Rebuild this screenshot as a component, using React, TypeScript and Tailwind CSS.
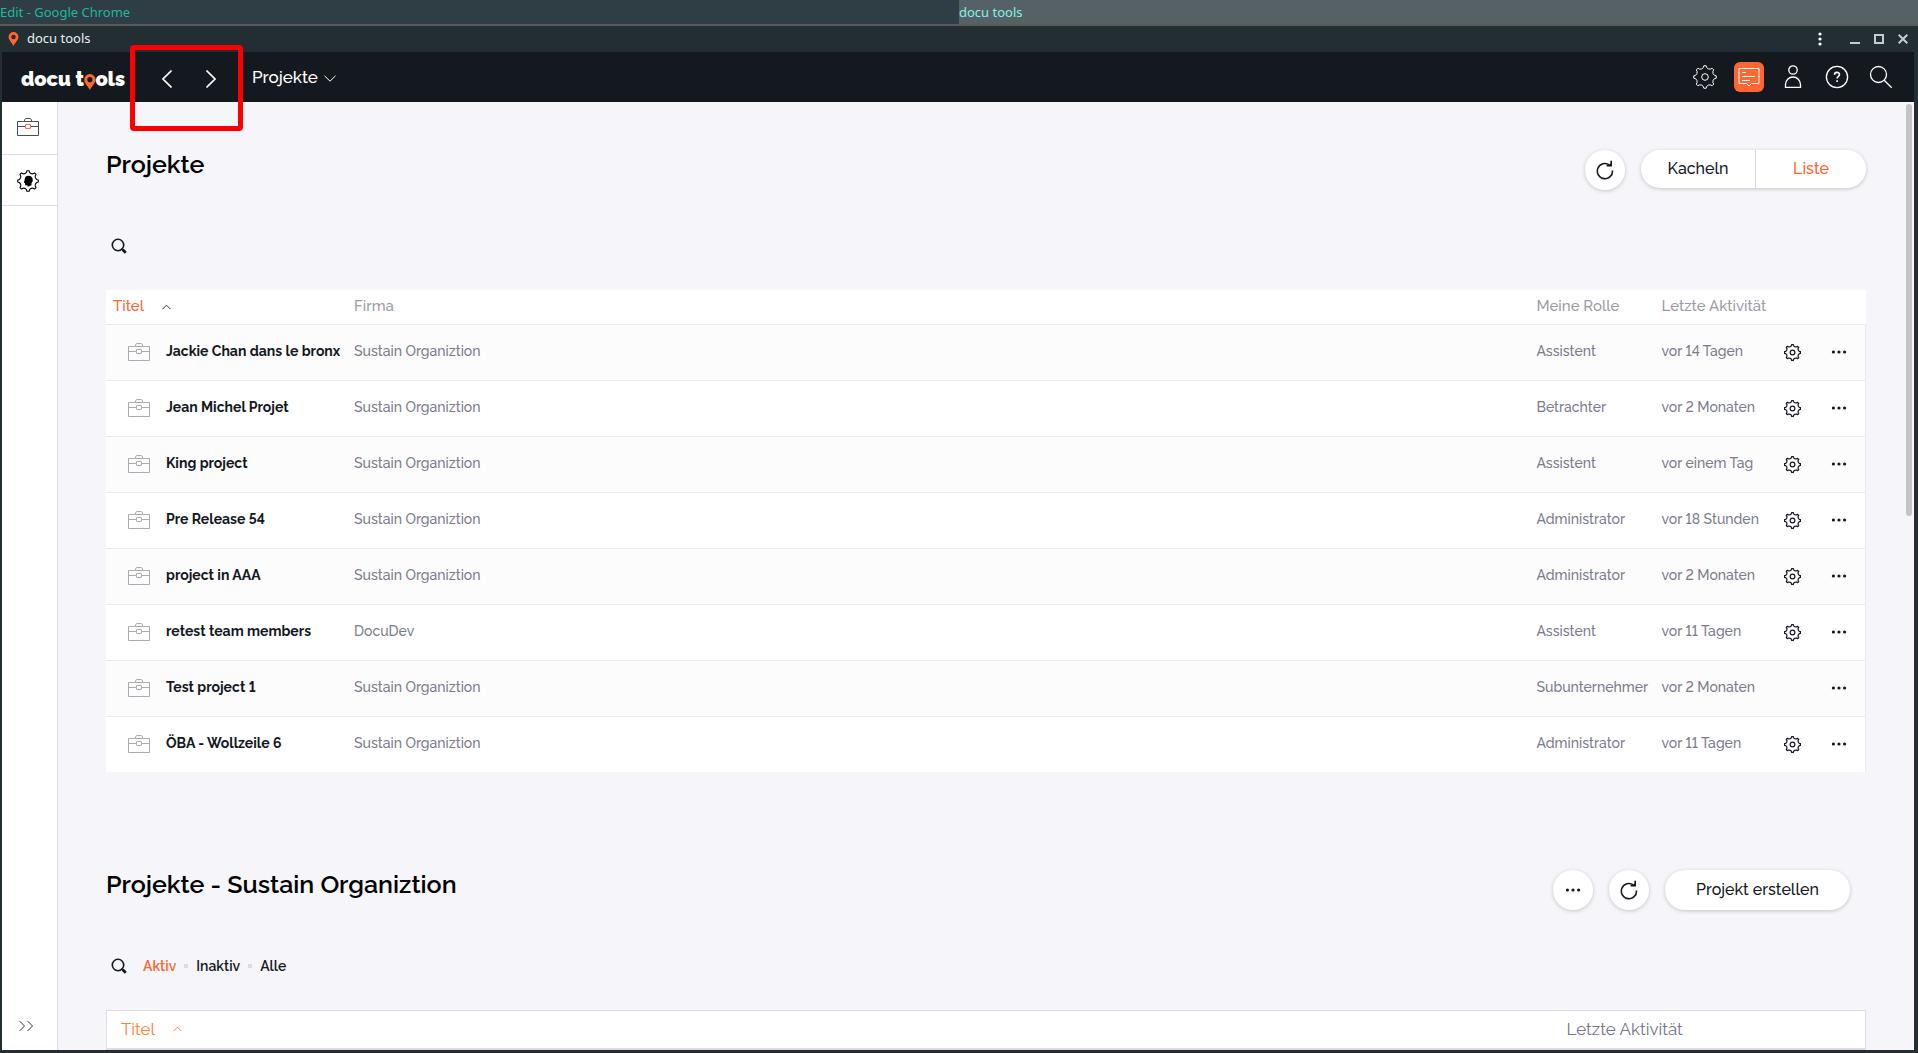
import type { ReactNode } from "react";

const projects = [
    { title: "Jackie Chan dans le bronx", company: "Sustain Organiztion", role: "Assistent", activity: "vor 14 Tagen", settings: true },
    { title: "Jean Michel Projet", company: "Sustain Organiztion", role: "Betrachter", activity: "vor 2 Monaten", settings: true },
    { title: "King project", company: "Sustain Organiztion", role: "Assistent", activity: "vor einem Tag", settings: true },
    { title: "Pre Release 54", company: "Sustain Organiztion", role: "Administrator", activity: "vor 18 Stunden", settings: true },
    { title: "project in AAA", company: "Sustain Organiztion", role: "Administrator", activity: "vor 2 Monaten", settings: true },
    { title: "retest team members", company: "DocuDev", role: "Assistent", activity: "vor 11 Tagen", settings: true },
    { title: "Test project 1", company: "Sustain Organiztion", role: "Subunternehmer", activity: "vor 2 Monaten", settings: false },
    { title: "ÖBA - Wollzeile 6", company: "Sustain Organiztion", role: "Administrator", activity: "vor 11 Tagen", settings: true },
];

// Outline of an eight tooth gear, centered in a 24x24 box
function gearOutline() {
    const point = (deg: number, r: number) => {
        const a = (deg * Math.PI) / 180;
        return `${(12 + r * Math.sin(a)).toFixed(2)} ${(12 - r * Math.cos(a)).toFixed(2)}`;
    };
    let d = `M${point(-6, 11.3)}`;
    for (let i = 0; i < 8; i++) {
        const a = i * 45;
        d += `L${point(a + 6, 11.3)}L${point(a + 10, 9.6)}A4.2 4.2 0 0 0 ${point(a + 35, 9.6)}L${point(a + 39, 11.3)}`;
    }
    return d + "Z";
}

const GEAR = gearOutline();

function Gear({ className, stroke, children }: { className: string; stroke: number; children?: ReactNode }) {
    return (
        <svg viewBox="0 0 24 24" className={className} fill="none" stroke="currentColor" strokeWidth={stroke} strokeLinejoin="round">
            <path d={GEAR} />
            {children ?? <circle cx="12" cy="12" r="3.3" />}
        </svg>
    );
}

function Briefcase({ accent }: { accent: string }) {
    return (
        <svg viewBox="0 0 22 18" className="h-[18px] w-[22px]" fill="none" stroke="currentColor">
            <path d="M.5 3.500h21v14H.5zM1 8.500h7.500M13.500 8.500H21M7.500 3.500v-1.500l1-1.500h5l1 1.500v1.500" />
            <rect x="8.500" y="6.500" width="5" height="4" rx=".5" stroke={accent} />
        </svg>
    );
}

function SearchSmall() {
    return (
        <svg viewBox="0 0 16 16" className="size-4" fill="none" stroke="currentColor">
            <circle cx="7" cy="7" r="5.700" strokeWidth="1.600" />
            <path d="M10.500 10.500l1 1" strokeWidth="1.600" />
            <path d="M11.500 11.500l3.300 3.300" strokeWidth="2.800" />
        </svg>
    );
}

function Refresh() {
    return (
        <svg viewBox="0 0 18 20" className="h-5 w-[18px]" fill="none" stroke="currentColor" strokeWidth="1.600">
            <path d="M16.500 10.500A7.600 7.600 0 1 1 13.400 5" />
            <path d="M15.200.8v4.800h-4.600" />
            <path d="M12.500 5.600l2.700-2v2z" fill="currentColor" strokeWidth=".5" />
        </svg>
    );
}

function Dots() {
    return (
        <svg viewBox="0 0 16 4" className="h-1 w-4" fill="currentColor">
            <circle cx="2.400" cy="2" r="1.600" />
            <circle cx="8" cy="2" r="1.600" />
            <circle cx="13.600" cy="2" r="1.600" />
        </svg>
    );
}

function Pin({ className }: { className: string }) {
    return (
        <svg viewBox="0 0 12 17" className={className}>
            <path
                fill="#ff6633"
                fillRule="evenodd"
                d="M6 0a6 6 0 0 1 6 6c0 3.500-3.500 6-6 11C3.500 12 0 9.500 0 6a6 6 0 0 1 6-6zm0 3.300a2.700 2.700 0 1 0 0 5.400 2.700 2.700 0 0 0 0-5.400z"
            />
        </svg>
    );
}

function SortArrow() {
    return (
        <svg viewBox="0 0 9 6" className="h-[6px] w-[9px]" fill="none" stroke="currentColor">
            <path d="M.5 5.200l4-4 4 4" />
        </svg>
    );
}

function RoundButton({ label, children }: { label: string; children: ReactNode }) {
    return (
        <button aria-label={label} className="flex size-10 items-center justify-center rounded-full bg-white shadow-[0_1px_4px_rgba(0,0,0,0.2)]">
            {children}
        </button>
    );
}

function HeaderButton({ label, children }: { label: string; children: ReactNode }) {
    return (
        <button aria-label={label} className="flex w-11 items-center justify-center">
            {children}
        </button>
    );
}

function DesktopPanel() {
    return (
        <div className="flex h-[26px] shrink-0 border-b-2 border-[#5a5a5a] text-[13px] leading-6 text-[#1abc9c]">
            <div className="w-1/2 bg-[#2f3d44]">Edit - Google Chrome</div>
            <div className="w-1/2 bg-[#566165] text-[#7df5e5]">docu tools</div>
        </div>
    );
}

function TitleBar() {
    return (
        <div className="flex h-[26px] shrink-0 items-center justify-between pr-2.5 pl-2 text-[13px] text-[#eceff1]">
            <div className="flex items-center gap-2">
                <Pin className="h-3.5 w-[11px]" />
                <span>docu tools</span>
            </div>
            <div className="flex items-center text-[#c3cdd1]">
                <button aria-label="Menü" className="mr-7">
                    <svg viewBox="0 0 4 14" className="h-3.5 w-1" fill="#fff">
                        <circle cx="2" cy="2" r="1.600" />
                        <circle cx="2" cy="7" r="1.600" />
                        <circle cx="2" cy="12" r="1.600" />
                    </svg>
                </button>
                <button aria-label="Minimieren" className="w-6">
                    <svg viewBox="0 0 10 10" className="size-2.5" fill="currentColor">
                        <path d="M0 8h10v2H0z" />
                    </svg>
                </button>
                <button aria-label="Maximieren" className="w-6">
                    <svg viewBox="0 0 10 10" className="size-2.5" fill="none" stroke="currentColor" strokeWidth="2">
                        <path d="M1 1h8v8H1z" />
                    </svg>
                </button>
                <button aria-label="Schließen">
                    <svg viewBox="0 0 10 10" className="size-2.5" fill="none" stroke="currentColor" strokeWidth="2">
                        <path d="M.7.7l8.600 8.600M9.300.7L.7 9.300" />
                    </svg>
                </button>
            </div>
        </div>
    );
}

function Header() {
    return (
        <header className="relative flex h-[50px] shrink-0 bg-[#14181f] text-white">
            {/* Logo */}
            <a href="#" className="flex w-[123px] items-center pt-1 pl-[19px] text-xl font-black whitespace-nowrap">
                <span>docu t</span>
                <Pin className="mt-1.5 h-4 w-3" />
                <span>ols</span>
            </a>
            {/* Verlauf */}
            <div className="flex items-center pt-1 pl-5">
                <HeaderButton label="Zurück">
                    <svg viewBox="0 0 10 18" className="h-[18px] w-2.5" fill="none" stroke="currentColor" strokeWidth="1.600">
                        <path d="M9.500.5L1 9l8.500 8.500" />
                    </svg>
                </HeaderButton>
                <HeaderButton label="Vor">
                    <svg viewBox="0 0 10 18" className="h-[18px] w-2.5" fill="none" stroke="currentColor" strokeWidth="1.600">
                        <path d="M.5.5L9 9 .5 17.500" />
                    </svg>
                </HeaderButton>
            </div>
            <div className="absolute -top-[7px] left-32 z-10 h-[86px] w-[113px] rounded border-5 border-[#ff0000]" />
            <button className="ml-[19px] flex items-center gap-1.5 pt-0.5 text-[17px] font-medium">
                Projekte
                <svg viewBox="0 0 12 7" className="h-[7px] w-3" fill="none" stroke="currentColor">
                    <path d="M.5.8L6 6.200 11.500.8" />
                </svg>
            </button>
            <div className="ml-auto flex items-center pr-[11px]">
                <HeaderButton label="Einstellungen">
                    <Gear className="size-6" stroke={1} />
                </HeaderButton>
                <HeaderButton label="Nachrichten">
                    <span className="flex size-[30px] items-center justify-center rounded-md bg-[#ff6633]">
                        <svg viewBox="0 0 22 20" className="h-5 w-[22px]" fill="none" stroke="currentColor">
                            <path d="M1 1.500h20v15h-7.500L11 19l-2.500-2.500H1zM4 5.500h4M4 9.500h13M4 13.500h8" />
                        </svg>
                    </span>
                </HeaderButton>
                <HeaderButton label="Benutzer">
                    <svg viewBox="0 0 18 24" className="h-6 w-[18px]" fill="none" stroke="currentColor" strokeWidth="1.300">
                        <circle cx="9" cy="5" r="4.200" />
                        <path d="M1.500 22.300v-2.800a7.500 7.500 0 0 1 15 0v2.800z" />
                    </svg>
                </HeaderButton>
                <HeaderButton label="Hilfe">
                    <svg viewBox="0 0 24 24" className="size-6" fill="none" stroke="currentColor" strokeWidth="1.300">
                        <circle cx="12" cy="12" r="10.600" />
                        <path d="M9.500 9.800c0-3.200 5-3.200 5-.2 0 1.700-2.400 2-2.400 4M12.100 15.300v1.800" strokeWidth="1.600" />
                    </svg>
                </HeaderButton>
                <HeaderButton label="Suche">
                    <svg viewBox="0 0 24 24" className="size-6" fill="none" stroke="currentColor" strokeWidth="1.300">
                        <circle cx="9.500" cy="9.500" r="8" />
                        <path d="M15.200 15.200l7.500 7.500" />
                    </svg>
                </HeaderButton>
            </div>
        </header>
    );
}

function Sidebar() {
    return (
        <nav className="flex w-14 shrink-0 flex-col border-r border-[#dcdce6] bg-white">
            <a href="#" aria-label="Projekte" className="flex h-[53px] items-center justify-center border-b border-[#dcdce6] pr-[3px] pb-0.5 text-[#4a5058]">
                <Briefcase accent="#ff6633" />
            </a>
            <a href="#" aria-label="Organisation" className="flex h-[51px] items-center justify-center border-b border-[#dcdce6] pt-0.5 pr-[3px] text-black">
                <Gear className="size-[22px]" stroke={1.2}>
                    <path
                        fill="currentColor"
                        stroke="none"
                        d="M12.500 6.300c3 0 4.700 2 4.700 4.600 0 1.700-.6 2.500-1.400 3.600v2.200l-4 1.600-.6-1.800H8.900l-.3-2.300-1.300-.7 1-2c-.3-3.200 1.500-5.200 4.200-5.200z"
                    />
                </Gear>
            </a>
            <button aria-label="Menü ausklappen" className="mt-auto mb-[18px] ml-[17px] w-3.5 text-[#333]">
                <svg viewBox="0 0 14 12" className="h-3 w-3.5" fill="none" stroke="currentColor">
                    <path d="M.5 1l5 5-5 5M8.500 1l5 5-5 5" />
                </svg>
            </button>
        </nav>
    );
}

function ProjectTable() {
    return (
        <table className="mt-9 w-full table-fixed border-collapse bg-white text-left text-sm font-medium text-[#7b7b8c]">
            <colgroup>
                <col className="w-[241px]" />
                <col />
                <col className="w-[125px]" />
                <col className="w-[118px]" />
                <col className="w-[40px]" />
                <col className="w-[53px]" />
            </colgroup>
            <thead>
                <tr className="h-[34px] text-[15px] whitespace-nowrap text-[#9c9ca8]">
                    <th className="px-[7px] py-0 font-medium text-[#ff6633]">
                        <button className="flex items-center gap-[18px]">
                            Titel
                            <span className="text-[#333]">
                                <SortArrow />
                            </span>
                        </button>
                    </th>
                    <th className="px-[7px] py-0 font-medium">Firma</th>
                    <th className="px-[7px] py-0 font-medium">Meine Rolle</th>
                    <th className="px-[7px] py-0 font-medium">Letzte Aktivität</th>
                    <th />
                    <th />
                </tr>
            </thead>
            <tbody>
                {projects.map((p) => (
                    <tr key={p.title} className="h-14 border-t border-r border-[#e9e9ee] whitespace-nowrap odd:bg-[#fcfcfc]">
                        <td className="pl-[22px]">
                            <div className="flex items-center gap-4">
                                <span className="text-[#aaaab6]">
                                    <Briefcase accent="#aaaab6" />
                                </span>
                                <a href="#" className="pb-0.5 font-bold text-[#14181f]">{p.title}</a>
                            </div>
                        </td>
                        <td className="px-[7px] pt-0 pb-0.5">{p.company}</td>
                        <td className="px-[7px] pt-0 pb-0.5">{p.role}</td>
                        <td className="px-[7px] pt-0 pb-0.5">{p.activity}</td>
                        <td className="text-[#14181f]">
                            {p.settings && (
                                <button aria-label="Einstellungen" className="mx-auto block">
                                    <Gear className="size-[17px]" stroke={1.7} />
                                </button>
                            )}
                        </td>
                        <td className="text-[#14181f]">
                            <button aria-label="Mehr" className="mx-auto block">
                                <Dots />
                            </button>
                        </td>
                    </tr>
                ))}
            </tbody>
        </table>
    );
}

function MyProjects() {
    return (
        <section>
            <div className="flex items-start justify-between">
                <h1 className="text-[25px] leading-7 font-semibold text-black">Projekte</h1>
                <div className="flex gap-4">
                    <RoundButton label="Aktualisieren">
                        <Refresh />
                    </RoundButton>
                    <div className="flex h-[38px] overflow-hidden rounded-full bg-white font-medium shadow-[0_1px_4px_rgba(0,0,0,0.2)]">
                        <button className="w-[115px] border-r border-[#d6d6de]">Kacheln</button>
                        <button className="w-[110px] text-[#ff6633]">Liste</button>
                    </div>
                </div>
            </div>
            <button aria-label="Projekte suchen" className="mt-12 ml-[5px] block">
                <SearchSmall />
            </button>
            <ProjectTable />
        </section>
    );
}

function OrganizationProjects() {
    return (
        <section className="mt-[98px]">
            <div className="flex items-start justify-between">
                <h2 className="text-[25px] leading-7 font-semibold text-black">Projekte - Sustain Organiztion</h2>
                <div className="flex gap-4 pr-4">
                    <RoundButton label="Mehr">
                        <Dots />
                    </RoundButton>
                    <RoundButton label="Aktualisieren">
                        <Refresh />
                    </RoundButton>
                    <button className="h-10 w-[185px] rounded-full bg-white font-medium shadow-[0_1px_4px_rgba(0,0,0,0.2)]">
                        Projekt erstellen
                    </button>
                </div>
            </div>
            <div className="mt-11 ml-[5px] flex h-6 items-center text-sm font-semibold">
                <button aria-label="Projekte suchen" className="mr-4">
                    <SearchSmall />
                </button>
                <button className="text-[#ff6633]">Aktiv</button>
                <span className="mx-2 size-1 bg-[#dcdce6]" />
                <button>Inaktiv</button>
                <span className="mx-2 size-1 bg-[#dcdce6]" />
                <button>Alle</button>
            </div>
            <table className="mt-8 w-full table-fixed border-collapse border border-[#dcdce6] bg-white text-left text-[17px] text-[#757587]">
                <colgroup>
                    <col />
                    <col className="w-[313px]" />
                </colgroup>
                <thead>
                    <tr className="h-[38px] border-b-2 border-[#dcdce6]">
                        <th className="py-0 pl-3.5 font-normal text-[#ff8033]">
                            <button className="flex items-center gap-[18px]">
                                Titel
                                <SortArrow />
                            </button>
                        </th>
                        <th className="py-0 pl-3.5 font-normal">Letzte Aktivität</th>
                    </tr>
                </thead>
            </table>
        </section>
    );
}

export default function App() {
    return (
        <div className="flex h-screen flex-col overflow-hidden bg-[#232e33] font-['Noto_Sans',sans-serif]">
            <DesktopPanel />
            <TitleBar />
            <div className="mr-1 mb-[3px] ml-0.5 flex min-h-0 flex-1 flex-col font-['Raleway','Lato',sans-serif] text-[#14181f] lining-nums">
                <Header />
                <div className="flex min-h-0 flex-1">
                    <Sidebar />
                    <main className="relative min-w-0 flex-1 overflow-hidden bg-[#f5f5fa] px-12 pt-12">
                        <MyProjects />
                        <OrganizationProjects />
                        {/* Scrollbar */}
                        <div className="absolute top-0.5 right-0.5 h-[412px] w-1.5 rounded-full bg-[#c4c4c6]" />
                    </main>
                </div>
            </div>
        </div>
    );
}
